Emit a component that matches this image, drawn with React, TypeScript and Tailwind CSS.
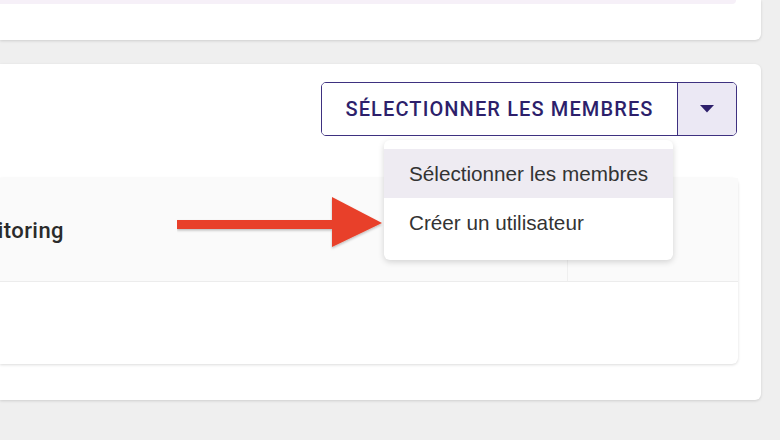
import React from "react";

const menuItems = ["Sélectionner les membres", "Créer un utilisateur"];

export default function App() {
  return (
    <div className="relative h-[440px] w-[780px] overflow-hidden bg-[#efefef] font-['Roboto','Liberation_Sans',sans-serif]">
      {/* Top card (cut off) */}
      <div className="mr-[19px] h-[40px] rounded-br-[6px] bg-white pr-[25px] shadow-[0_1px_3px_rgba(0,0,0,0.14)]">
        <div className="h-[4px] rounded-br-[6px] bg-[#f6f0f8]" />
      </div>

      {/* Members card */}
      <div className="mt-[24px] mr-[19px] h-[336px] rounded-r-[6px] bg-white pt-[18px] pr-[23px] shadow-[0_1px_3px_rgba(0,0,0,0.14)]">
        <div className="relative flex justify-end pr-[1px]">
          <div className="flex h-[54px] overflow-hidden rounded-[5px] border-[1.5px] border-[#3e3180]">
            <button className="flex w-[355px] items-center justify-center bg-white text-[20px] font-medium tracking-[0.056em] text-[#2d1f6b]">
              SÉLECTIONNER LES MEMBRES
            </button>
            <button className="flex w-[59px] items-center justify-center border-l-[1.5px] border-[#3e3180] bg-[#ebe8f4]">
              <svg width="16" height="8" viewBox="0 0 16 8">
                <polygon points="1,0 15,0 8,7.5" fill="#2d1f6b" />
              </svg>
            </button>
          </div>

          {/* Dropdown menu */}
          <div className="absolute top-[58px] right-[65px] z-10 w-[289px] rounded-[6px] bg-white pt-[9px] pb-[12px] font-['Liberation_Sans','Roboto',sans-serif] shadow-[0_2px_6px_rgba(0,0,0,0.16)]">
            {menuItems.map((item, i) => (
              <div
                key={item}
                className={
                  i === 0
                    ? "flex h-[49px] items-center bg-[#eeebf2] pl-[25px] text-[20.7px] text-[#333333]"
                    : "flex h-[50px] items-center pl-[25px] text-[20.7px] text-[#333333]"
                }
              >
                {item}
              </div>
            ))}
          </div>
        </div>

        {/* Table */}
        <div className="mt-[42px] h-[186px] rounded-r-[6px] bg-white shadow-[0_1px_3px_rgba(0,0,0,0.14)]">
          <div className="flex h-[104px] items-center border-b border-[#ececec] bg-[#fafafa]">
            <div className="flex w-[64px] justify-end overflow-hidden whitespace-nowrap pt-[2px] text-[22px] font-medium tracking-[0.02em] text-[#2b2b2b]">
              Monitoring
            </div>
            <div className="ml-[503px] h-full border-l border-[#efefef]" />
          </div>
          <div className="h-[81px]" />
        </div>
      </div>

      {/* Annotation arrow */}
      <svg
        className="absolute top-[196px] left-[177px] z-20"
        width="208"
        height="56"
        viewBox="0 0 208 56"
      >
        <defs>
          <filter id="sh" x="-5%" y="-10%" width="110%" height="130%">
            <feDropShadow dx="0" dy="1.5" stdDeviation="1" floodColor="#000" floodOpacity="0.25" />
          </filter>
        </defs>
        <g filter="url(#sh)" fill="#e8402a">
          <rect x="0" y="24" width="157" height="9" />
          <polygon points="155,1 205,27 155,51" />
        </g>
      </svg>
    </div>
  );
}
